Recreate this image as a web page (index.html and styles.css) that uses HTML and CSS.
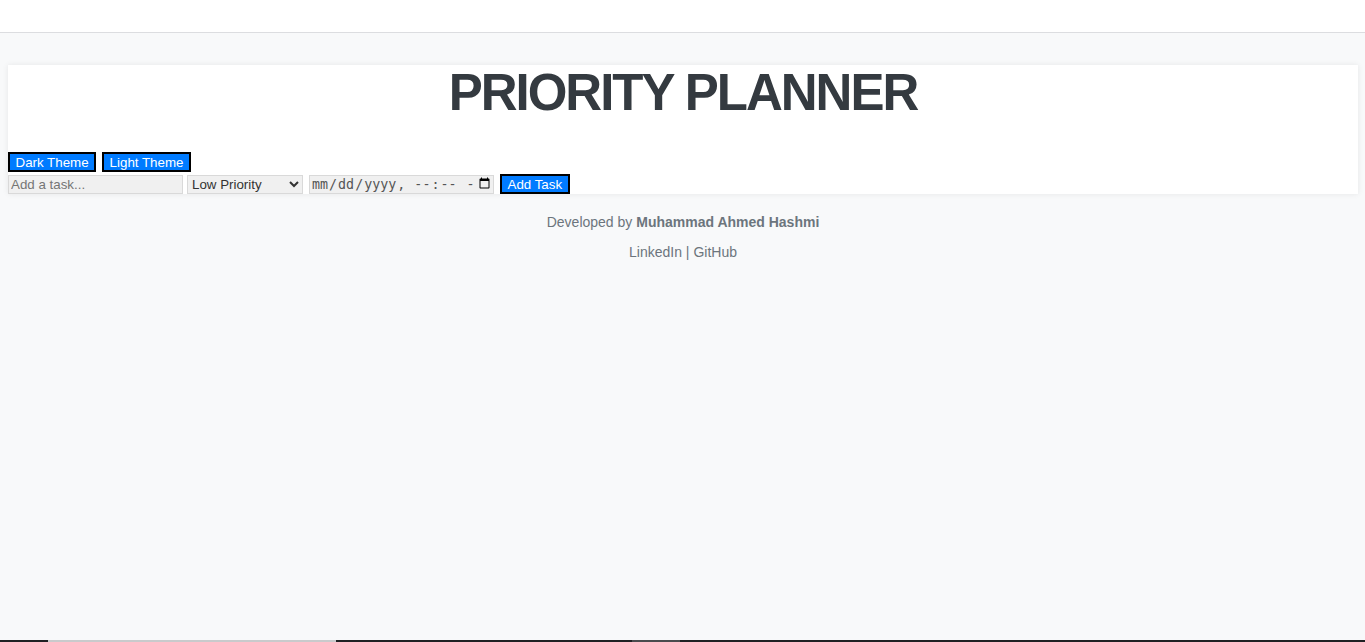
FILE: index.html
```html
<!DOCTYPE html>
<html lang="en">
<head>
<meta charset="utf-8">
<title>Priority Planner</title>
<link rel="stylesheet" href="styles.css">
</head>
<body>
<div class="topband"></div>
<main class="page">
  <section class="card">
    <h1 class="title">PRIORITY PLANNER</h1>
    <div class="theme-row">
      <button class="btn">Dark Theme</button>
      <button class="btn">Light Theme</button>
    </div>
    <div class="task-row">
      <input class="task-input" type="text" placeholder="Add a task...">
      <select class="priority">
        <option>Low Priority</option>
        <option>Medium Priority</option>
        <option>High Priority</option>
      </select>
      <input class="due" type="datetime-local">
      <button class="btn">Add Task</button>
    </div>
  </section>
  <footer class="credits">
    <p>Developed by <strong>Muhammad Ahmed Hashmi</strong></p>
    <p><a href="#">LinkedIn</a> | <a href="#">GitHub</a></p>
  </footer>
</main>
<div class="taskbar"><span class="seg-a"></span><span class="seg-b"></span></div>
</body>
</html>
```
FILE: styles.css
```css
html, body {
  margin: 0;
  padding: 0;
  background: #f8f9fa;
  font-family: "Liberation Sans", Arial, sans-serif;
}
body {
  min-height: 100vh;
}
.topband {
  height: 32px;
  background: #ffffff;
  border-bottom: 1px solid #dcdde0;
}
.page {
  padding: 32px 7px 0 8px;
}
.card {
  background: #ffffff;
  box-shadow: 0 0 6px rgba(0, 0, 0, 0.08);
  display: flex;
  flex-direction: column;
}
.title {
  margin: 0 0 33px 0;
  padding-top: 1px;
  font-size: 51px;
  line-height: 53px;
  letter-spacing: -2px;
  font-weight: bold;
  text-align: center;
  color: #343a40;
}
.theme-row {
  display: flex;
  gap: 6px;
  margin-bottom: 2px;
}
.task-row {
  display: flex;
  align-items: center;
}
.btn {
  font-family: "Liberation Sans", Arial, sans-serif;
  font-size: 13.33px;
  line-height: 15px;
  background: #007bff;
  color: #ffffff;
  border: 2px solid #000000;
  padding: 1px 5.5px;
  height: 20px;
  cursor: pointer;
}
.task-input {
  box-sizing: border-box;
  width: 175px;
  height: 19px;
  margin-right: 4px;
  padding: 0 2px;
  border: 1px solid #d9d9d9;
  background: #f0f0f0;
  font-family: "Liberation Sans", Arial, sans-serif;
  font-size: 13.33px;
  color: #333;
}
.task-input::placeholder {
  color: #757575;
}
.priority {
  box-sizing: border-box;
  width: 116px;
  height: 19px;
  margin-right: 6px;
  border: 1px solid #d9d9d9;
  background: #f0f0f0;
  font-family: "Liberation Sans", Arial, sans-serif;
  font-size: 13.33px;
  color: #333;
}
.due {
  box-sizing: border-box;
  width: 185px;
  height: 19px;
  margin-right: 6px;
  border: 1px solid #d9d9d9;
  background: #f0f0f0;
  font-size: 13.33px;
  color: #555;
}
.credits {
  padding-top: 6px;
  text-align: center;
  color: #6c757d;
  font-size: 14px;
}
.credits p {
  margin: 14px 0;
}
.credits a {
  color: #6c757d;
  text-decoration: none;
}
.taskbar {
  position: fixed;
  left: 0;
  right: 0;
  bottom: 0;
  height: 2px;
  background: #1f2023;
  display: flex;
}
.seg-a {
  margin-left: 48px;
  width: 288px;
  background: #c9cacc;
}
.seg-b {
  margin-left: 296px;
  width: 48px;
  background: #4a4b4e;
}
```
